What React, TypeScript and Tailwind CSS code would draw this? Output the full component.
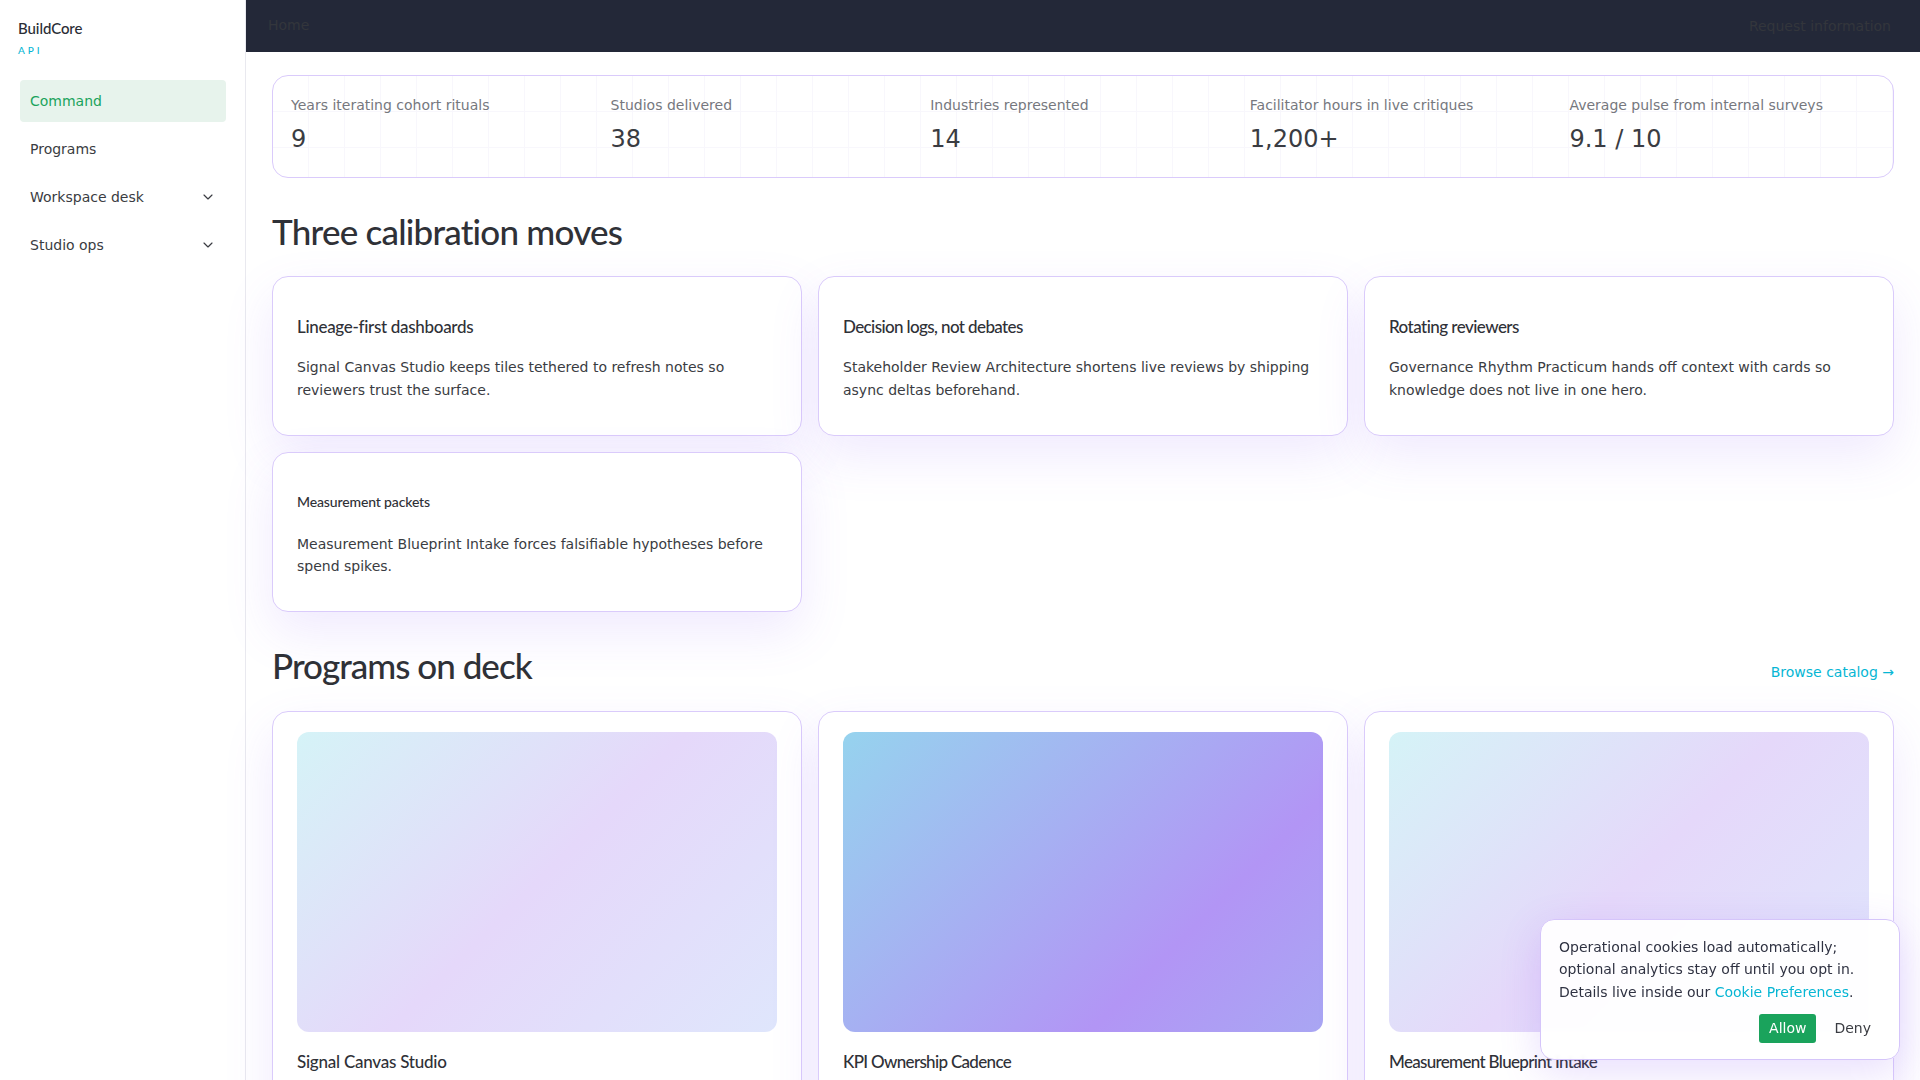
import { ChevronDown } from "lucide-react";

const stats = [
  ["Years iterating cohort rituals", "9"],
  ["Studios delivered", "38"],
  ["Industries represented", "14"],
  ["Facilitator hours in live critiques", "1,200+"],
  ["Average pulse from internal surveys", "9.1 / 10"],
];

const moves = [
  ["Lineage-first dashboards", "tracking-[-0.018em]", "Signal Canvas Studio keeps tiles tethered to refresh notes so reviewers trust the surface."],
  ["Decision logs, not debates", "tracking-[-0.036em]", "Stakeholder Review Architecture shortens live reviews by shipping async deltas beforehand."],
  ["Rotating reviewers", "tracking-[-0.032em]", "Governance Rhythm Practicum hands off context with cards so knowledge does not live in one hero."],
];

const programs = [
  ["Signal Canvas Studio", "tracking-[-0.014em]", "bg-[linear-gradient(135deg,#d5f3f7_0%,#e5d8fa_50%,#dfe6fc_100%)]"],
  ["KPI Ownership Cadence", "tracking-[-0.04em]", "bg-[linear-gradient(135deg,#96d3ee_0%,#b295f5_70%,#a9a6f3_100%)]"],
  ["Measurement Blueprint Intake", "tracking-[-0.04em]", "bg-[linear-gradient(135deg,#d5f3f7_0%,#e5d8fa_50%,#dfe6fc_100%)]"],
];

const heading = "font-['Lato',sans-serif]";
const card = "rounded-[16px] border border-[#dacbfb] bg-white shadow-[0_20px_50px_rgba(139,92,246,0.13)]";

export default function App() {
  return (
    <div className="flex h-screen overflow-hidden bg-white font-['DejaVu_Sans',sans-serif] text-sm leading-[1.6] text-[#3a3c42]">
      <aside className="w-[246px] shrink-0 border-r border-[#e9e9ef] bg-white">
        <div className={`px-[18px] pt-[18px] ${heading}`}>
          <div className="text-[15px] font-medium leading-5 tracking-[-0.005em] text-[#2a2d35]">BuildCore</div>
          <div className="mt-[6px] text-[10px] font-medium leading-[12px] tracking-[0.3em] text-[#06b6d4]">API</div>
        </div>
        <nav className="mt-[24px] flex flex-col gap-[6px] pl-[20px] pr-[19px]">
          <div className="flex h-[42px] items-center rounded-[4px] bg-[#e7f3ec] px-[10px] text-[#1aa35c]">Command</div>
          <div className="flex h-[42px] items-center px-[10px]">Programs</div>
          <div className="flex h-[42px] items-center justify-between px-[10px]">
            Workspace desk
            <ChevronDown size={16} strokeWidth={1.75} />
          </div>
          <div className="flex h-[42px] items-center justify-between px-[10px]">
            Studio ops
            <ChevronDown size={16} strokeWidth={1.75} />
          </div>
        </nav>
      </aside>

      <div className="min-w-0 flex-1">
        <header className="flex h-[52px] items-start justify-between bg-[#232838] pl-[22px] pr-[29px] text-[#33363c]">
          <span className="pt-[14px]">Home</span>
          <span className="pt-[15px]">Request information</span>
        </header>

        <main className="px-[26px] pt-[23px]">
          <section className="grid h-[103px] grid-cols-5 gap-4 rounded-[16px] border border-[#dacbfb] bg-white bg-[linear-gradient(#f8f7fc_1px,transparent_1px),linear-gradient(90deg,#f8f7fc_1px,transparent_1px)] bg-[size:36px_36px] bg-[position:-1px_-1px] pl-[18px] pr-[20px] pt-[18px]">
            {stats.map(([label, value]) => (
              <div key={label}>
                <div className="text-[#76787e]">{label}</div>
                <div className="mt-[4px] text-2xl leading-[38px]">{value}</div>
              </div>
            ))}
          </section>

          <h2 className={`mt-[31px] text-[35px] font-medium leading-[44px] tracking-[-0.022em] text-[#2f3137] ${heading}`}>Three calibration moves</h2>

          <div className="mt-[23px] grid grid-cols-3 gap-4">
            {moves.map(([title, tracking, body]) => (
              <div key={title} className={`${card} h-[160px] px-6 pt-[38px]`}>
                <h3 className={`text-[17px] font-medium leading-6 text-[#2f3137] ${tracking} ${heading}`}>{title}</h3>
                <p className="mt-[17px] leading-[23px]">{body}</p>
              </div>
            ))}
            <div className={`${card} h-[160px] px-6 pt-[39px]`}>
              <h3 className={`text-[14px] font-medium leading-5 tracking-[-0.01em] text-[#2f3137] ${heading}`}>Measurement packets</h3>
              <p className="mt-[21px]">Measurement Blueprint Intake forces falsifiable hypotheses before spend spikes.</p>
            </div>
          </div>

          <div className="mt-[31px] flex items-end justify-between">
            <h2 className={`text-[35px] font-medium leading-[44px] tracking-[-0.028em] text-[#2f3137] ${heading}`}>Programs on deck</h2>
            <a className="pb-[4px] text-[#06b6d4]">Browse catalog →</a>
          </div>

          <div className="mt-[24px] grid grid-cols-3 gap-4">
            {programs.map(([title, tracking, gradient]) => (
              <div key={title} className={`${card} h-[500px] px-6 pt-5`}>
                <div className={`h-[300px] rounded-[12px] ${gradient}`} />
                <h3 className={`mt-[18px] text-[17px] font-medium leading-6 text-[#2f3137] ${tracking} ${heading}`}>{title}</h3>
              </div>
            ))}
          </div>
        </main>
      </div>

      <div className="fixed bottom-[20px] right-[20px] w-[360px] rounded-[14px] border border-[#d5c5fa] bg-white/95 pb-[16px] pl-[18px] pr-[17px] pt-[16px] shadow-[0_12px_40px_rgba(139,92,246,0.2)] backdrop-blur-[2px]">
        <p className="text-[#2f3242]">
          Operational cookies load automatically; optional analytics stay off until you opt in. Details live inside our{" "}
          <a className="text-[#06b6d4]">Cookie Preferences</a>.
        </p>
        <div className="mt-[11px] flex items-center justify-end gap-[10px]">
          <button className="h-[29px] rounded-[3px] bg-[#1aa35c] px-[10px] text-white">Allow</button>
          <button className="h-[29px] pl-[8px] pr-[11px] text-[#3a3c42]">Deny</button>
        </div>
      </div>
    </div>
  );
}
